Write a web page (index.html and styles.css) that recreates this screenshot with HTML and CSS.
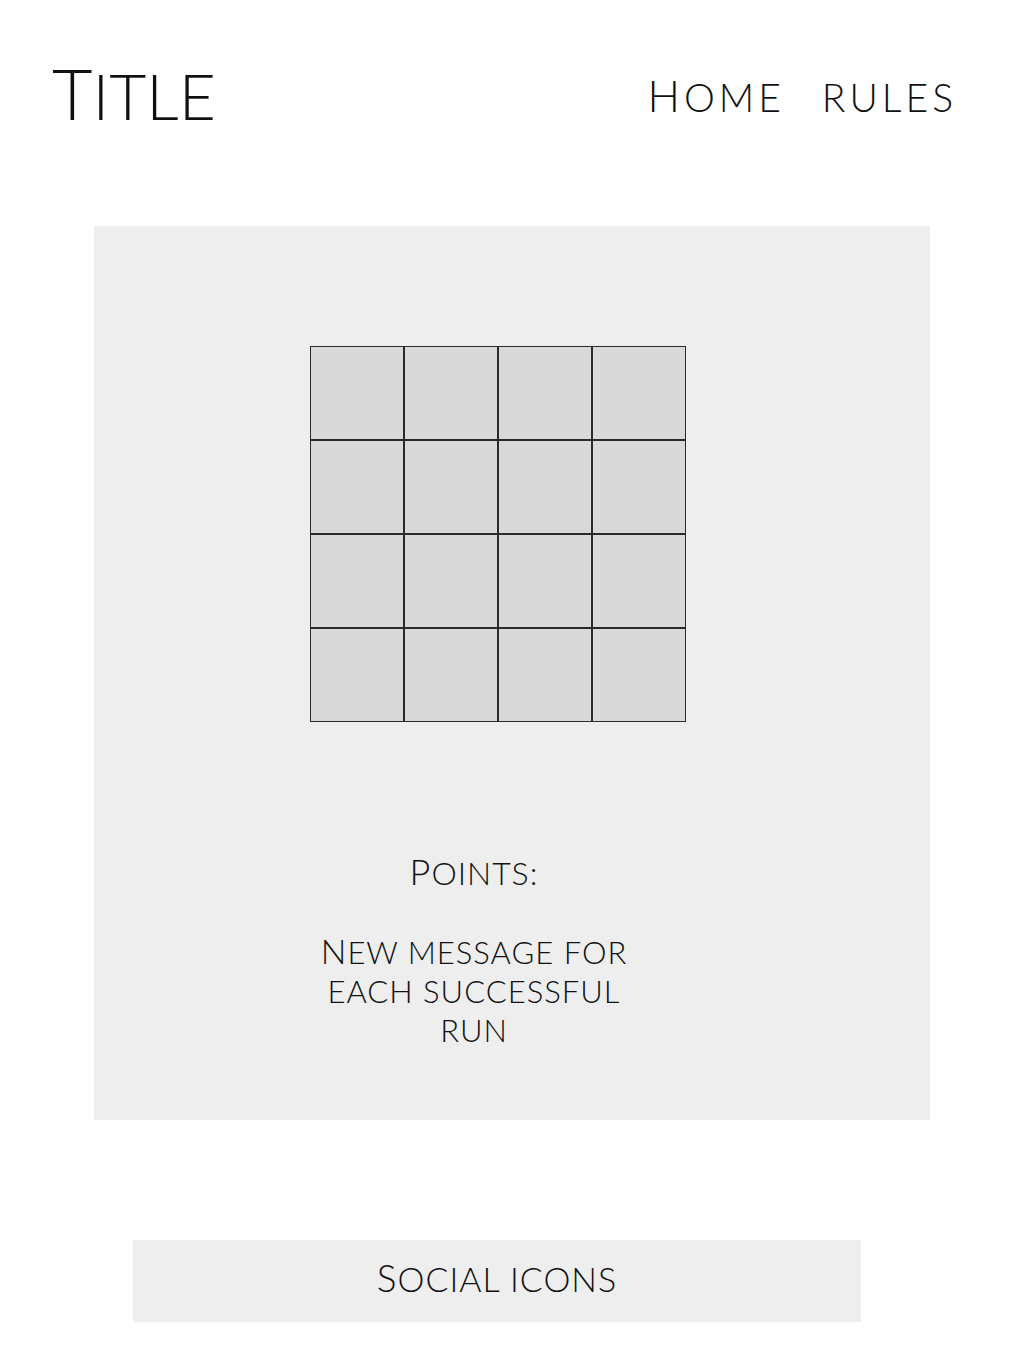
FILE: index.html
```html
<!DOCTYPE html>
<html lang="en">
<head>
  <meta charset="UTF-8">
  <meta name="viewport" content="width=device-width, initial-scale=1.0">
  <title>Title</title>
  <link rel="stylesheet" href="styles.css">
</head>
<body>
  <!-- Cabecera -->
  <header class="top">
    <h1 class="logo">Title</h1>
    <nav class="menu">
      <a href="#" class="menu-link cap">Home</a>
      <a href="#" class="menu-link">rules</a>
    </nav>
  </header>

  <!-- Tablero del juego -->
  <main class="board">
    <div class="grid">
      <div class="cell"></div><div class="cell"></div><div class="cell"></div><div class="cell"></div>
      <div class="cell"></div><div class="cell"></div><div class="cell"></div><div class="cell"></div>
      <div class="cell"></div><div class="cell"></div><div class="cell"></div><div class="cell"></div>
      <div class="cell"></div><div class="cell"></div><div class="cell"></div><div class="cell"></div>
    </div>
    <div class="info">
      <p class="points">Points:</p>
      <p class="message">New message for each successful run</p>
    </div>
  </main>

  <!-- Pie -->
  <footer class="social">
    <p class="social-text">Social icons</p>
  </footer>
</body>
</html>
```

FILE: styles.css
```css
/* === BASE === */
* {
  margin: 0;
  padding: 0;
  box-sizing: border-box;
}
body {
  font-family: 'Lato', 'Open Sans', sans-serif;
  font-weight: 300;
  color: #111;
  background: #fff;
  width: 1024px;
  min-height: 1366px;
}

/* === CABECERA === */
.top {
  display: flex;
  justify-content: space-between;
  align-items: flex-start;
  padding: 58px 67px 0 52px;
  height: 226px;
}
.logo {
  font-weight: 300;
  font-size: 64px;
  line-height: 1;
  text-transform: uppercase;
}
.logo::first-letter {
  font-size: 70px;
}
.menu {
  display: flex;
  align-items: baseline;
  gap: 37px;
  margin-top: 16px;
}
.menu-link {
  display: inline-block;
  color: #111;
  text-decoration: none;
  font-size: 39px;
  line-height: 1;
  text-transform: uppercase;
  letter-spacing: 4px;
}
.menu-link.cap::first-letter {
  font-size: 43px;
}

/* === TABLERO === */
.board {
  margin-left: 94px;
  width: 836px;
  height: 894px;
  background: #eeeeee;
  padding: 120px 0 0 216px;
}
.grid {
  display: grid;
  grid-template-columns: repeat(4, 94px);
  grid-template-rows: repeat(4, 94px);
  width: 376px;
}
.cell {
  background: #d9d9d9;
  border: 1px solid #2a2a2a;
}
.info {
  width: 328px;
  margin-top: 128px;
  text-align: center;
  text-transform: uppercase;
}
.points {
  font-size: 32px;
  line-height: 1.2;
  letter-spacing: 1px;
}
.points::first-letter {
  font-size: 36px;
}
.message {
  margin-top: 38px;
  font-size: 31px;
  line-height: 39px;
  letter-spacing: 1px;
}
.message::first-letter {
  font-size: 34px;
}

/* === PIE === */
.social {
  margin: 120px 0 0 133px;
  width: 728px;
  height: 82px;
  background: #eeeeee;
  display: flex;
  align-items: center;
  justify-content: center;
}
.social-text {
  font-size: 34px;
  line-height: 1;
  text-transform: uppercase;
  letter-spacing: 1px;
  margin-bottom: 7px;
}
.social-text::first-letter {
  font-size: 37px;
}
```
